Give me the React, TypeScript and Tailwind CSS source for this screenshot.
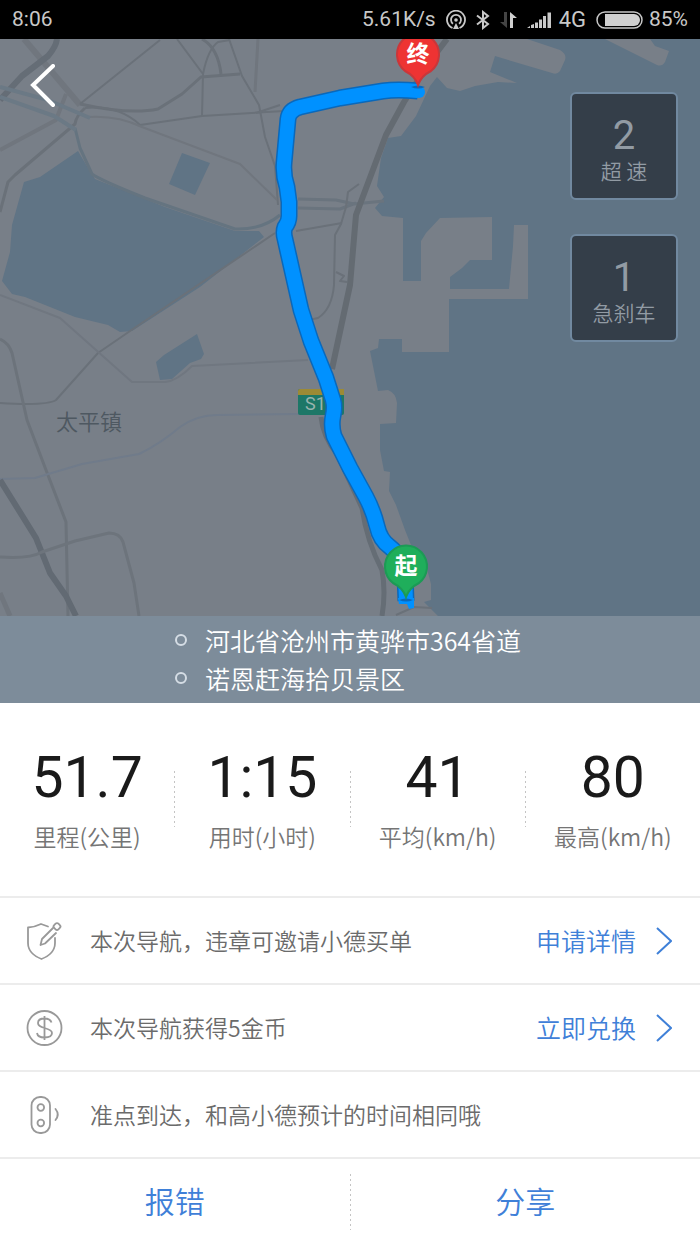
import React from "react";

const water = "#607485";
const land = "#787f88";

const seaPath =
  "M700 39 L650 39 L655 46 L669 51 L665 62 Q662 67 657 65 L605 39 L527 39 L560 50 Q567 54 565 60 L560 71 Q557 75 552 73 L495 56 L490 72 L517 83 L498 82 L475 86 L460 91 L447 88 L437 77 L430 86 L416 116 L401 136 L388 138 L381 158 L377 186 L384 197 L375 208 L382 216 L403 218 L403 281 L421 281 L421 241 L426 233 L440 218 L492 217 L492 260 L470 260 L462 268 L450 277 L450 289 L509 289 L513 246 L514 225 L528 225 L528 299 L449 299 L449 352 L402 352 L402 339 L379 339 L378 348 L370 351 L378 391 L388 390 Q396 393 397 403 L396 423 L380 424 L380 450 L384 471 L390 472 L389 491 L396 505 L405 530 L411 545 L426 565 L431 584 L431 600 L424 602 L438 616 L700 616 Z";

type Road = { d: string; w: number; c?: string };

const roads: Road[] = [
  { d: "M24 39 L80 105", w: 6, c: "#70767e" },
  { d: "M57 39 Q56 47 48 56 L22 76 L0 100", w: 6, c: "#656d76" },
  { d: "M80 104 L160 40", w: 2 },
  { d: "M80 104 Q130 115 158 109 L182 94 L201 77 L240 74", w: 3 },
  { d: "M177 39 L203 74 L202 116", w: 2 },
  { d: "M203 74 Q208 49 218 42 L230 40", w: 2 },
  { d: "M202 39 Q218 48 221 74", w: 3 },
  { d: "M229 39 L242 76 L259 105 L265 137 L275 166 L278 205", w: 2 },
  { d: "M258 39 L255 92", w: 3, c: "#70767e" },
  { d: "M85 108 Q119 105 140 125 L202 116 L284 111", w: 2 },
  { d: "M85 108 Q76 116 75 124 L15 175 L8 182 L0 212", w: 3 },
  { d: "M0 150 L56 120 L66 94", w: 4, c: "#70767e" },
  { d: "M88 117 Q117 115 142 127 L240 164 L277 200", w: 2, c: "#70767e" },
  { d: "M75 128 L80 148 L92 174 Q100 180 145 198 L235 229 Q262 230 280 215", w: 3, c: "#657480" },
  { d: "M275 233 L133 329 L98 353 L56 400 Q47 406 0 403", w: 2 },
  { d: "M0 295 L60 318 L132 382 L165 382 Q177 381 192 366 L308 360", w: 2, c: "#707780" },
  { d: "M0 339 Q9 343 12 353 L27 420 L46 470 L66 522 L68 616", w: 3, c: "#6c737b" },
  { d: "M0 479 L35 478 L82 464 L139 454 Q160 444 180 427 Q197 415 217 415 L299 414", w: 2, c: "#707b8a" },
  { d: "M0 480 L36 538 L50 573 L66 596 L76 616", w: 6, c: "#626a73" },
  { d: "M0 557 Q30 559 42 552 L75 541 L109 533 Q120 533 123 542 L134 583 L139 616", w: 3, c: "#6d747c" },
  { d: "M0 593 L10 616", w: 5, c: "#70767e" },
  { d: "M0 87 L48 100 L90 118 M0 97 L54 116 L76 130", w: 4, c: "#6b7985" },
  { d: "M298 199 L336 200 L354 204 L384 201 M298 208 L340 209 L356 203", w: 3, c: "#6a747e" },
  { d: "M359 184 L348 192 L346 207 L341 224 L335 235 L334 285 Q332 309 318 318 L304 321", w: 2 },
  { d: "M280 105 L256 113 M296 231 L342 223", w: 2 },
  { d: "M336 272 L344 276 L340 281 L347 282", w: 2 },
  { d: "M447 39 L431 60 L404 102 L386 135 L356 215 L350 285 L332 369", w: 6, c: "#646b72" },
  { d: "M321 417 Q323 437 337 454 L362 508 Q367 542 382 570 Q386 592 382 616", w: 5, c: "#656d75" },
];

const routePath =
  "M418 91 Q397 89 383 91 L340 98 L300 107 Q289 110 288 119 L284 163 Q283 175 287 187 L289 202 L289 216 Q289 222 285 227 Q283 232 285 239 L294 279 L301 310 L311 341 L326 378 L333 400 Q335 407 333 416 Q331 426 334 436 L350 468 L366 497 Q373 510 377 526 Q380 540 390 547 Q403 557 405 575 L406 601";

function Pin({ x, y, fill, edge, label }: { x: number; y: number; fill: string; edge: string; label: string }) {
  return (
    <g transform={`translate(${x} ${y})`}>
      <path
        d="M0 31 Q-3 22 -13 17 A21 21 0 1 1 13 17 Q3 22 0 31 Z"
        fill={fill}
        stroke={edge}
        strokeWidth="2"
      />
      <text
        x="0"
        y="8"
        textAnchor="middle"
        fontSize="23"
        fill="#fff"
        className="font-['Roboto','Noto_Sans_CJK_SC',sans-serif] font-bold"
      >
        {label}
      </text>
    </g>
  );
}

function RouteMap() {
  return (
    <svg
      className="absolute inset-0 h-full w-full"
      viewBox="0 39 700 577"
      preserveAspectRatio="xMidYMid slice"
      role="img"
      aria-label="行程路线"
    >
      <rect x="0" y="39" width="700" height="577" fill={land} />
      <path d={seaPath} fill={water} />
      <path
        d="M78 151 L40 177 L24 182 L12 225 L10 252 L2 281 L12 294 L25 297 L75 317 L108 325 L120 332 L132 331 L200 287 L264 237 L259 231 L235 231 L165 207 L95 179 L88 168 Z"
        fill={water}
      />
      <path d="M182 153 L210 163 L195 195 L169 184 Z" fill={water} />
      <path d="M197 334 L204 354 L201 359 L190 363 L172 379 L160 380 L156 362 L164 355 Z" fill={water} />
      <g fill="none" strokeLinejoin="round">
        {roads.map((r) => (
          <path key={r.d} d={r.d} stroke={r.c ?? "#6a7179"} strokeWidth={r.w} />
        ))}
      </g>
      <path d="M396 615 L414 607 L432 608" fill="none" stroke="#6a7179" strokeWidth="2" />
      <text x="89" y="430" textAnchor="middle" fontSize="22" fill="#4e5861">
        太平镇
      </text>
      <rect x="298" y="389" width="46" height="26" rx="2" fill="#1d7767" />
      <path d="M298 395 V391 Q298 389 300 389 H344 V395 Z" fill="#9c8a35" />
      <text x="305" y="410" fontSize="18" fill="#98b3ae" className="font-['Roboto',sans-serif] font-normal">
        S1
      </text>
      <g fill="none" strokeLinecap="butt" strokeLinejoin="round">
        <path d={routePath} stroke="#0a68ba" strokeWidth="17" />
        <path d={routePath} stroke="#0091ff" strokeWidth="14" />
      </g>
      <circle cx="419" cy="92" r="6" fill="#0091ff" />
      <path d="M398 598 H414 V608 L409 609 L407 604 L399 604 Z" fill="#0091ff" />
      <path d="M411 87 Q418 84 425 87 Q418 90 411 87 M399 600 Q406 597 413 600 Q406 603 399 600" fill="#0a68ba" />
      <Pin x={418} y={54} fill="#ee3333" edge="#c9373a" label="终" />
      <Pin x={406} y={566} fill="#1fae5b" edge="#1c9a55" label="起" />
    </svg>
  );
}

function StatusBar() {
  return (
    <div className="flex h-[39px] items-center bg-black px-3 font-['Roboto',sans-serif] text-[21px] font-normal text-[#c8c8c8]">
      <span className="flex-1">8:06</span>
      <span>5.61K/s</span>
      <svg className="ml-2.5 h-5 w-5" viewBox="0 0 20 20" fill="none" stroke="#c8c8c8" strokeWidth="1.8" aria-hidden="true">
        <path d="M6.5 18 A9 9 0 1 1 13.5 18" />
        <path d="M7 13.8 A5 5 0 1 1 13 13.8" />
        <circle cx="10" cy="10" r="1.800" fill="#c8c8c8" stroke="none" />
        <path d="M10 13 L13 19 H7 Z" fill="#c8c8c8" stroke="none" />
      </svg>
      <svg className="ml-2.5 h-5 w-3.5" viewBox="0 0 14 20" fill="none" stroke="#c8c8c8" strokeWidth="2" aria-hidden="true">
        <path d="M1 5.5 L12 14 L7 18 V2 L12 6 L1 14.5" />
      </svg>
      <svg className="ml-2.5 h-5 w-[17px]" viewBox="0 0 17 20" aria-hidden="true">
        <path d="M7 2 V18 L0 12 H4 V2 Z" fill="#444" />
        <path d="M10 18 V2 L17 8 H13 V18 Z" fill="#d0d0d0" />
      </svg>
      <svg className="ml-2.5 h-5 w-6" viewBox="0 0 24 20" fill="#c8c8c8" aria-hidden="true">
        <path d="M0 18 L3 16 V18 Z M4 15 L7 14 V18 H4 Z M8 12.500 H11 V18 H8 Z M12 9.500 H15 V18 H12 Z M16 6 H19 V18 H16 Z M20.500 2.500 H24 V18 H20.500 Z" />
      </svg>
      <span className="ml-2 text-[22px]">4G</span>
      <svg className="ml-2.5 h-[18px] w-[47px]" viewBox="0 0 47 18" aria-hidden="true">
        <rect x="1" y="1" width="45" height="16" rx="8" fill="none" stroke="#c8c8c8" strokeWidth="1.500" />
        <path d="M9 3 H38 A6 6 0 0 1 38 15 H9 Z" fill="#d0d0d0" />
      </svg>
      <span className="ml-1.5">85%</span>
    </div>
  );
}

function EventTile({ count, label }: { count: string; label: string }) {
  return (
    <div className="flex h-[108px] w-[108px] flex-col items-center justify-center rounded-md border-2 border-[#7189a0] bg-[#343e49] pt-2 text-[#929ba4]">
      <span className="font-['Roboto',sans-serif] text-[40px] leading-10 font-normal">{count}</span>
      <span className="text-[21px] leading-7">{label}</span>
    </div>
  );
}

function Chevron() {
  return (
    <svg className="h-7 w-4" viewBox="0 0 16 28" fill="none" stroke="#3f80d8" strokeWidth="2" aria-hidden="true">
      <path d="M1 1 L15 14 L1 27" />
    </svg>
  );
}

const shieldIcon = (
  <svg className="h-10 w-10" viewBox="0 0 40 40" fill="none" stroke="#999" strokeWidth="1.800" strokeLinejoin="round" strokeLinecap="round" aria-hidden="true">
    <path d="M24 5.500 L17 3 Q11 6 4 6.500 V22 C4 31 12 36 17.500 38 C23 36 31 31 31 22 V17" />
    <path d="M16.500 24 L18 18 L29 7 M32 12 L21 22.500 L16.500 24" />
    <rect x="30" y="2.500" width="6" height="6" rx="2" transform="rotate(45 33 5.500)" />
  </svg>
);

const coinIcon = (
  <svg className="h-10 w-10" viewBox="0 0 40 40" fill="none" stroke="#999" strokeWidth="1.800" aria-hidden="true">
    <circle cx="20.500" cy="20" r="17" />
    <path d="M27.500 14.500 C26.500 11.500 24 10.500 20.500 10.500 C16.500 10.500 14 12 14 15 C14 18 16.500 19 20.500 20 C24.500 21 28 22 28 25 C28 28 24.500 29.500 20.500 29.500 C16.500 29.500 13.500 28 13 25 M20.500 8 V32" />
  </svg>
);

const signalIcon = (
  <svg className="h-10 w-10" viewBox="0 0 40 40" fill="none" stroke="#999" strokeWidth="1.800" strokeLinecap="round" aria-hidden="true">
    <rect x="7.500" y="2" width="18.500" height="36" rx="8.500" />
    <circle cx="16.800" cy="12.500" r="3.300" />
    <circle cx="16.800" cy="28" r="3.300" />
    <path d="M31.500 14 Q36 19.500 31.500 25" />
  </svg>
);

function InfoRow({ icon, text, action }: { icon: React.ReactNode; text: string; action?: string }) {
  return (
    <li className="flex h-[87px] items-center border-t-2 border-[#ececec] pr-7 pl-6">
      {icon}
      <span className="ml-[26px] flex-1 text-[23px] text-[#6b6b6b]">{text}</span>
      {action && (
        <a href="#" className="flex items-center gap-5 text-[25px] text-[#3f80d8]">
          {action}
          <Chevron />
        </a>
      )}
    </li>
  );
}

const dottedLine =
  "w-px bg-[repeating-linear-gradient(to_bottom,#c4c4c4_0_2px,transparent_2px_5px)]";

const stats = [
  { value: "51.7", label: "里程(公里)" },
  { value: "1:15", label: "用时(小时)" },
  { value: "41", label: "平均(km/h)" },
  { value: "80", label: "最高(km/h)" },
];

export default function App() {
  return (
    <main className="bg-white font-['Noto_Sans_CJK_SC',sans-serif] font-[350]">
      <StatusBar />
      <section className="relative flex aspect-[700/577] items-start justify-between overflow-hidden pt-[53px] pr-[22px] pl-[30px]">
        <RouteMap />
        <button type="button" aria-label="返回" className="relative -mt-7">
          <svg className="h-11 w-[26px]" viewBox="0 0 26 44" fill="none" stroke="#fff" strokeWidth="4" strokeLinecap="round" aria-hidden="true">
            <path d="M23 2 L3 21 L23 41" />
          </svg>
        </button>
        <div className="relative flex flex-col gap-[34px]">
          <EventTile count="2" label="超 速" />
          <EventTile count="1" label="急刹车" />
        </div>
      </section>
      <section className="flex justify-center bg-[#7d8c9a] pt-[5px] pr-1 pb-1.5 text-white">
        <ul>
          {["河北省沧州市黄骅市364省道", "诺恩赶海拾贝景区"].map((place) => (
            <li key={place} className="flex items-center gap-[18px] text-[25px] leading-[38px]">
              <span className="h-3 w-3 rounded-full border-2 border-[#d5dde5]" />
              {place}
            </li>
          ))}
        </ul>
      </section>
      <section className="flex h-[193px] items-start pt-[43px]">
        {stats.map((s, i) => (
          <React.Fragment key={s.label}>
            {i > 0 && <span className={`${dottedLine} mt-[25px] h-14`} />}
            <div className="flex flex-1 flex-col items-center">
              <span className="font-['Roboto',sans-serif] text-[57px] leading-[64px] font-normal text-[#1a1a1a]">{s.value}</span>
              <span className="mt-2.5 text-[23px] leading-8 text-[#757575]">{s.label}</span>
            </div>
          </React.Fragment>
        ))}
      </section>
      <ul>
        <InfoRow icon={shieldIcon} text="本次导航，违章可邀请小德买单" action="申请详情" />
        <InfoRow icon={coinIcon} text="本次导航获得5金币" action="立即兑换" />
        <InfoRow icon={signalIcon} text="准点到达，和高小德预计的时间相同哦" />
      </ul>
      <footer className="flex h-[87px] items-center border-t-2 border-[#ececec] text-[30px] text-[#3f80d8]">
        <button type="button" className="h-full flex-1 pb-0.5">报错</button>
        <span className={`${dottedLine} h-14`} />
        <button type="button" className="h-full flex-1 pb-0.5">分享</button>
      </footer>
    </main>
  );
}
